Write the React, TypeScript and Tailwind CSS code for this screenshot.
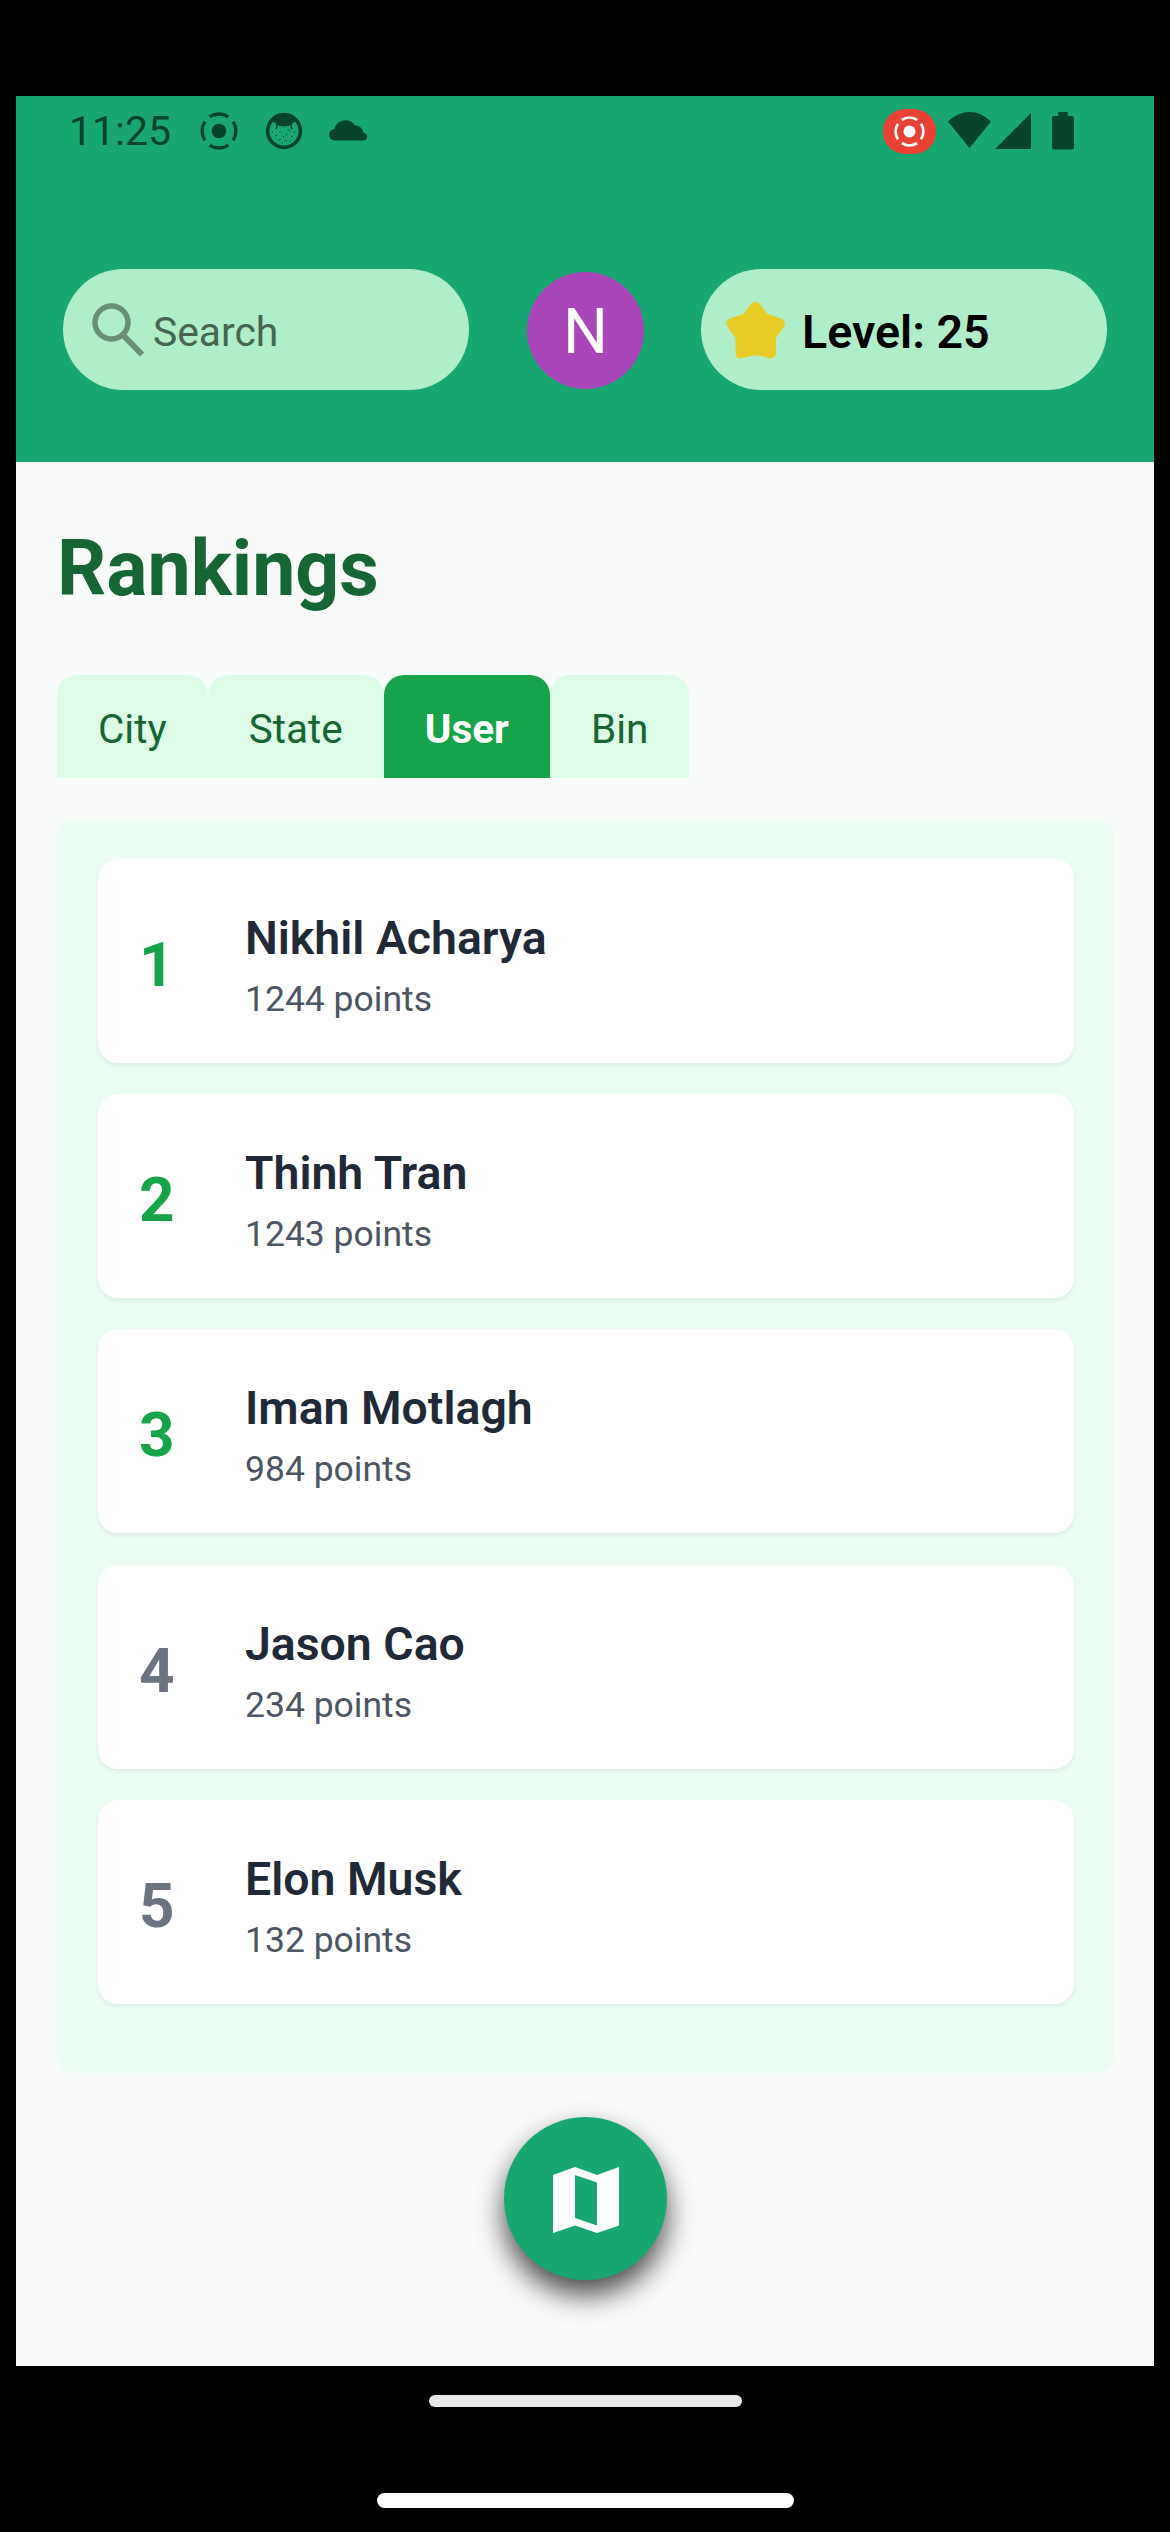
import { useState } from "react";

interface RankingRowProps {
  rank: number
  name: string
  points: number
}

const users: RankingRowProps[] = [
  { rank: 1, name: "Nikhil Acharya", points: 1244 },
  { rank: 2, name: "Thinh Tran", points: 1243 },
  { rank: 3, name: "Iman Motlagh", points: 984 },
  { rank: 4, name: "Jason Cao", points: 234 },
  { rank: 5, name: "Elon Musk", points: 132 },
];

const tabs = ["City", "State", "User", "Bin"];

const RecordIcon = ({ className }: { className: string }) => (
  <svg viewBox="0 0 38 38" className={className} fill="none" stroke="currentColor" strokeWidth="3.4">
    <circle cx="19" cy="19" r="7.3" fill="currentColor" stroke="none" />
    <path d="M9.6 4.9a17 17 0 0 1 18.8 0M33.1 9.6a17 17 0 0 1 0 18.8M28.4 33.1a17 17 0 0 1-18.8 0M4.9 28.4a17 17 0 0 1 0-18.8" />
  </svg>
);

const FaceIcon = () => (
  <svg viewBox="0 0 38 38" className="ml-[27px] size-[38px]">
    <circle cx="19" cy="19" r="16.4" fill="none" stroke="currentColor" strokeWidth="3.6" />
    <path d="M5 9C10 1 28 1 33 9L28.500 10.500Q27 13.500 23.500 13.800Q19 15 14.500 13.800Q11 13.500 9.500 10.500z" fill="currentColor" />
    <path d="M13 12.500Q11.300 13.500 11.300 17M25 12.500Q26.700 13.500 26.700 17" fill="none" stroke="currentColor" strokeWidth="1.600" />
    <path d="M7 20h1M10.500 23.500h1.500M14.500 20h1M18 24.500h1M22.500 18h2M21 22.500h1M26 24.500h2M29 20h1M14 28h1.500M20 28.500h1.500M24 29h1M17 31h1" stroke="currentColor" strokeWidth="1.100" />
  </svg>
);

const StatusBar = () => {
  return (
    <div className="flex h-[70px] items-center pl-[53px] pr-[80px] text-[#07442b]">
      <span className="w-[131px] text-[41px] leading-none">11:25</span>
      <RecordIcon className="size-[38px]" />
      <FaceIcon />
      <svg viewBox="0 0 40 23" className="mb-[3px] ml-[26px] h-[23px] w-10" fill="currentColor">
        <path d="M6 22.500a5.700 5.700 0 0 1-.6-11.400A11.400 11.400 0 0 1 26 7.500a8.500 8.500 0 0 1 8.600 7.400A3.900 3.900 0 0 1 35.500 22.500z" />
      </svg>
      <div className="ml-auto flex items-center">
        <div className="flex h-[45px] w-[53px] items-center justify-center rounded-[22px] bg-[#e94235] text-white">
          <RecordIcon className="size-[31px]" />
        </div>
        <svg viewBox="0 0 43 36" className="mb-[2px] ml-[12px] h-9 w-[43px]" fill="currentColor">
          <path d="M21.500 36L0 9.500Q9.500 0 21.500 0T43 9.500z" />
        </svg>
        <svg viewBox="0 0 36 36" className="mb-[1px] ml-[4px] size-9" fill="currentColor">
          <path d="M36 0v36H0z" />
        </svg>
        <svg viewBox="0 0 22 38" className="ml-[21px] h-[38px] w-[22px]" fill="currentColor">
          <path d="M6.300 0h9.400v4H20a2 2 0 0 1 2 2v29.500a2 2 0 0 1-2 2H2a2 2 0 0 1-2-2V6a2 2 0 0 1 2-2h4.300z" />
        </svg>
      </div>
    </div>
  )
}

const Header = () => {
  return (
    <header className="h-[366px] bg-[#19a771]">
      <StatusBar />
      <div className="mt-[103px] flex items-center justify-between px-[47px]">
        <div className="flex h-[121px] w-[406px] items-center rounded-full bg-[#b0edc9] pl-[29px]">
          <svg viewBox="0 0 53 54" className="h-[54px] w-[53px]" fill="none" stroke="#6a8f79" strokeWidth="5.5">
            <circle cx="19.500" cy="19.500" r="16.500" />
            <path d="M31 32L50 51.500" strokeWidth="6" />
          </svg>
          <span className="ml-[8px] mt-[5px] text-[40.8px] leading-none text-[#466651]">Search</span>
        </div>
        <div className="mt-[2px] flex size-[117px] items-center justify-center rounded-full bg-[#a946ba] pl-px pt-[3px] text-[63px] text-white">
          N
        </div>
        <div className="flex h-[121px] w-[406px] items-center rounded-full bg-[#b0edc9] pl-[25px]">
          <svg viewBox="0 0 60 58" className="h-[58px] w-[60px]" fill="#e8cd28">
            <path d="M24.500 3.500Q29.500-2 34.500 3.500L41.500 13 54 17Q61.500 20 57.500 26.500L50 37V52Q49 59 42 57Q29.500 52 17 57Q10 59 9.500 52V37L2 26.500Q-2.500 20 5 17L17.500 13z" />
          </svg>
          <span className="ml-[16px] mt-[6px] text-[46.6px] font-semibold leading-none text-black">Level: 25</span>
        </div>
      </div>
    </header>
  )
}

const RankingRow = ({ rank, name, points }: RankingRowProps) => {
  return (
    <li className="flex h-[204px] items-center rounded-[20px] bg-white pl-[41px] shadow-[0_3px_4px_rgba(0,0,0,0.06)]">
      <span className={`w-[106px] pt-[8px] text-[62px] font-bold leading-none ${rank <= 3 ? "text-[#16a34a]" : "text-[#6b7280]"}`}>
        {rank}
      </span>
      <div className="pt-[15px]">
        <p className="text-[46.4px] font-semibold leading-[61px] text-[#1f2937]">{name}</p>
        <p className="text-[35.5px] leading-[60px] text-[#4b5563]">{points} points</p>
      </div>
    </li>
  )
}

const App = () => {
  const [active, setActive] = useState("User");

  return (
    <div className="flex h-[2532px] w-[1170px] flex-col bg-black px-4 pt-24 font-['Roboto',sans-serif]">
      <Header />
      <main className="flex h-[1904px] flex-col items-center bg-[#f9fafa] pl-[41px] pr-10">
        <h1 className="mt-[61px] w-full text-[77px] font-bold leading-[92px] text-[#166534]">Rankings</h1>
        <div className="mt-[60px] flex w-full">
          {tabs.map((tab) => (
            <button
              key={tab}
              onClick={() => setActive(tab)}
              className={`h-[103px] rounded-t-[20px] px-[41px] pt-[5px] text-[40.5px] ${tab === active ? "bg-[#16a34a] font-bold text-white" : "bg-[#dcfce7] text-[#166534]"}`}
            >
              {tab}
            </button>
          ))}
        </div>
        <ul className="mt-[41px] flex h-[1254px] w-full flex-col gap-[31.2px] rounded-[16px] bg-[#ecfdf3] pl-[41px] pr-10 pt-[40px]">
          {users.map((user) => (
            <RankingRow key={user.rank} {...user} />
          ))}
        </ul>
        <button className="mt-[44px] flex size-[163px] items-center justify-center rounded-full bg-[#19a771] shadow-[0_15px_28px_rgba(0,0,0,0.7)]">
          <svg viewBox="0 0 66 66" className="mt-[3px] size-[66px]" fill="white" fillRule="evenodd">
            <path d="M0 8L22 0 44 8 66 0V58.500L44 66 22 58.500 0 66zM22 8V51L44 58.500V15.500z" />
          </svg>
        </button>
      </main>
      <div className="flex flex-col items-center pt-[29px]">
        <div className="h-[12px] w-[313px] rounded-full bg-[#e9e9e9]" />
        <div className="mt-[86px] h-[15px] w-[417px] rounded-full bg-white" />
      </div>
    </div>
  )
}

export default App
